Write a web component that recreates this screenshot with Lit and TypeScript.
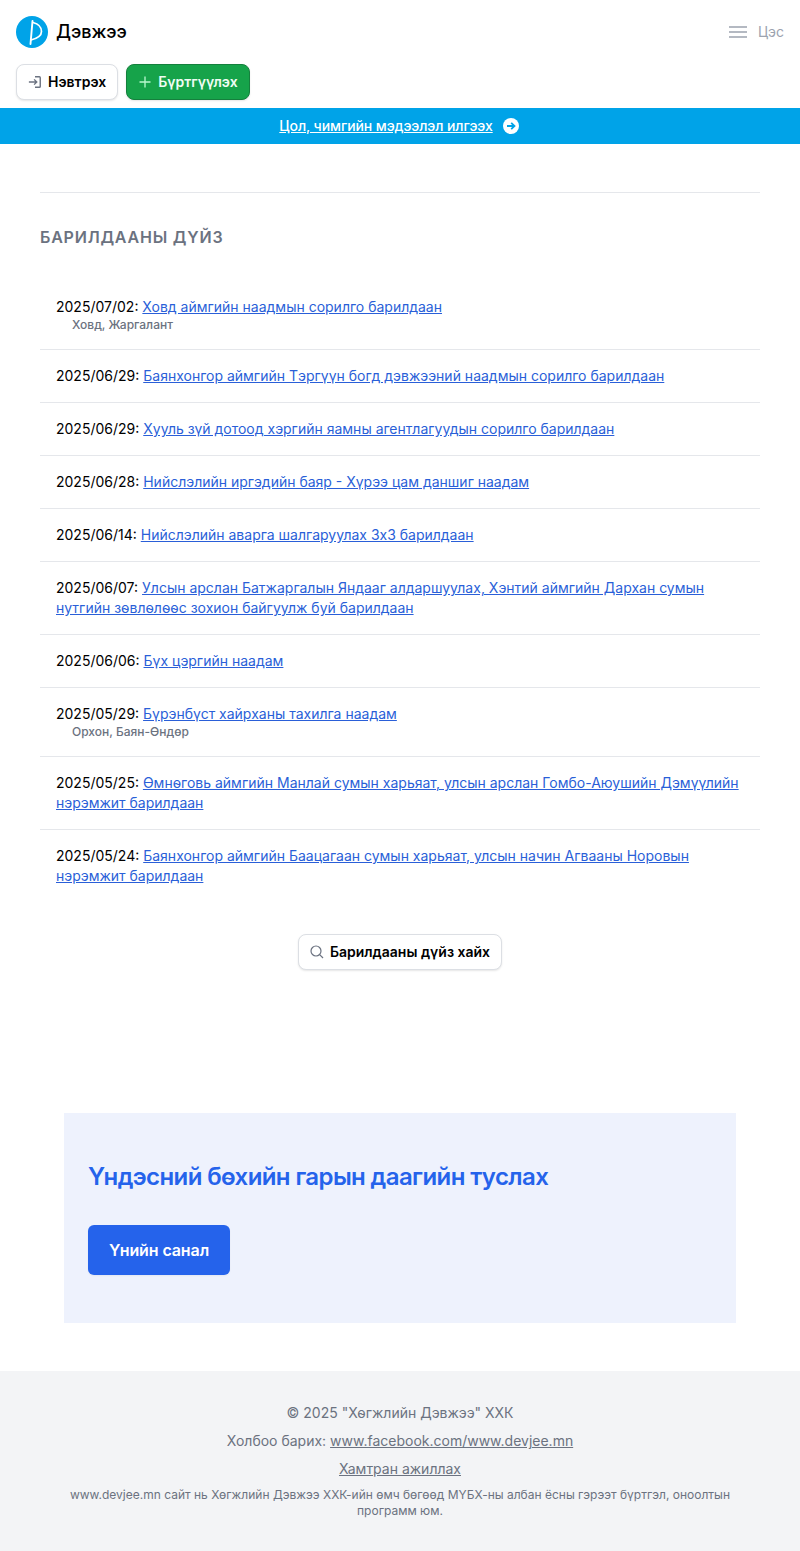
import { LitElement, html, css } from "lit";
import { customElement } from "lit/decorators.js";

const rows = [
  { d: "2025/07/02", t: "Ховд аймгийн наадмын сорилго барилдаан", s: "Ховд, Жаргалант" },
  { d: "2025/06/29", t: "Баянхонгор аймгийн Тэргүүн богд дэвжээний наадмын сорилго барилдаан" },
  { d: "2025/06/29", t: "Хууль зүй дотоод хэргийн яамны агентлагуудын сорилго барилдаан" },
  { d: "2025/06/28", t: "Нийслэлийн иргэдийн баяр - Хүрээ цам даншиг наадам" },
  { d: "2025/06/14", t: "Нийслэлийн аварга шалгаруулах 3х3 барилдаан" },
  { d: "2025/06/07", t: "Улсын арслан Батжаргалын Яндааг алдаршуулах, Хэнтий аймгийн Дархан сумын нутгийн зөвлөлөөс зохион байгуулж буй барилдаан" },
  { d: "2025/06/06", t: "Бүх цэргийн наадам" },
  { d: "2025/05/29", t: "Бүрэнбүст хайрханы тахилга наадам", s: "Орхон, Баян-Өндөр" },
  { d: "2025/05/25", t: "Өмнөговь аймгийн Манлай сумын харьяат, улсын арслан Гомбо-Аюушийн Дэмүүлийн нэрэмжит барилдаан" },
  { d: "2025/05/24", t: "Баянхонгор аймгийн Баацагаан сумын харьяат, улсын начин Агвааны Норовын нэрэмжит барилдаан" },
];

@customElement("app-root")
export class AppRoot extends LitElement {
  static styles = css`
    :host { display: block; font-family: Inter, "Liberation Sans", sans-serif; color: #000; background: #fff; }
    a { color: inherit; }
    .top { display: flex; justify-content: space-between; align-items: center; height: 64px; padding: 0 16px; box-sizing: border-box; }
    .brand { display: flex; align-items: center; gap: 8px; font-size: 18px; font-weight: 500; line-height: 28px; color: #000; letter-spacing: -.05px; }
    .brand svg { display: block; }
    .menu { display: flex; align-items: center; gap: 10px; font-size: 14px; line-height: 20px; color: #9ca3af; }
    .menu svg { display: block; }
    .actions { display: flex; gap: 8px; padding: 0 16px 8px; }
    .btn { display: inline-flex; align-items: center; box-sizing: border-box; height: 36px; border-radius: 8px; font-size: 14px; line-height: 20px; font-weight: 600; border: 1px solid #dcdfe4; background: #fff; color: #000; box-shadow: 0 1px 2px rgba(0,0,0,.1); }
    .login { padding: 0 11px; gap: 6px; }
    .register { padding: 0 11px; gap: 8px; background: #16a34a; border-color: #15803d; color: #f0fdf4; }
    .register svg { margin-left: 1px; margin-right: -1px; }
    .banner { display: flex; align-items: center; justify-content: center; gap: 10px; height: 36px; padding-right: 2px; background: #00a3e8; color: #fff; font-size: 14px; font-weight: 500; line-height: 20px; letter-spacing: -.1px; }
    main { padding: 48px 40px 0; }
    hr { border: 0; border-top: 1px solid #e5e7eb; margin: 0; }
    h2 { margin: 32px 0 0; font-size: 16px; line-height: 24px; font-weight: 600; letter-spacing: .8px; color: #6b7280; }
    ul { list-style: none; margin: 32px 0 0; padding: 0; }
    li { padding: 16px; font-size: 14px; line-height: 20px; border-bottom: 1px solid #e5e7eb; }
    li:last-child { border-bottom: 0; }
    li a { color: #2a5fd8; }
    .sub { padding-left: 16px; font-size: 12px; line-height: 16px; font-weight: 500; color: #6b7280; }
    .search-wrap { display: flex; justify-content: center; margin-top: 32px; }
    .search { padding: 0 11px; gap: 6px; }
    .promo { margin: 143px 64px 0; padding: 48px 24px; height: 210px; box-sizing: border-box; background: #eef2fd; }
    .promo h3 { margin: 0; font-size: 24px; line-height: 32px; font-weight: 600; letter-spacing: -.6px; color: #2563eb; }
    .cta { display: inline-flex; align-items: center; margin-top: 32px; height: 50px; padding: 0 21px; border-radius: 6px; background: #2563eb; color: #fff; font-size: 16px; line-height: 24px; font-weight: 600; letter-spacing: -.1px; box-shadow: 0 1px 2px rgba(0,0,0,.05); }
    footer { margin-top: 48px; height: 180px; padding: 32px 48px 0; box-sizing: border-box; background: #f3f4f6; color: #6b7280; text-align: center; font-size: 14px; line-height: 20px; }
    footer p { margin: 0 0 8px; }
    footer .fine { margin: 0; font-size: 12px; line-height: 16px; }
  `;

  render() {
    return html`
      <header class="top">
        <div class="brand">
          <svg width="32" height="32" viewBox="0 0 32 32">
            <circle cx="16" cy="16" r="16" fill="#00a3e8"/>
            <path d="M17 6.500C22.500 8 25.500 11.500 25.500 15.500C25.500 19.500 21 22.500 15 24" fill="none" stroke="#fff" stroke-width="1.700" stroke-linecap="round"/>
            <path d="M16.500 5L14.500 28" fill="none" stroke="#fff" stroke-width="1.900" stroke-linecap="round"/>
          </svg>
          Дэвжээ
        </div>
        <div class="menu">
          <svg width="20" height="20" viewBox="0 0 20 20" stroke="#9ca3af" stroke-width="1.5" fill="none"><path d="M1 5h18M1 10h18M1 15h18"/></svg>
          Цэс
        </div>
      </header>
      <div class="actions">
        <span class="btn login">
          <svg width="14" height="14" viewBox="0 0 16 16" fill="none" stroke="#6b7280" stroke-width="1.600"><path d="M1 8h9M7 5l3 3-3 3M8 2h5a1 1 0 0 1 1 1v10a1 1 0 0 1-1 1H8"/></svg>
          Нэвтрэх
        </span>
        <span class="btn register">
          <svg width="12" height="12" viewBox="0 0 12 12" fill="none" stroke="#bbf7d0" stroke-width="1.300"><path d="M6 .5v11M.5 6h11"/></svg>
          Бүртгүүлэх
        </span>
      </div>
      <div class="banner">
        <a href="#">Цол, чимгийн мэдээлэл илгээх</a>
        <svg width="16" height="16" viewBox="0 0 16 16"><circle cx="8" cy="8" r="8" fill="#fff"/><path d="M4 8h7.500M8.200 4.800 11.500 8l-3.300 3.200" fill="none" stroke="#00a3e8" stroke-width="1.800"/></svg>
      </div>
      <main>
        <hr />
        <h2>БАРИЛДААНЫ ДҮЙЗ</h2>
        <ul>
          ${rows.map((r) => html`<li>${r.d}: <a href="#">${r.t}</a>${r.s ? html`<div class="sub">${r.s}</div>` : ""}</li>`)}
        </ul>
        <div class="search-wrap">
          <span class="btn search">
            <svg width="14" height="14" viewBox="0 0 14 14" fill="none" stroke="#6b7280" stroke-width="1.200"><circle cx="6" cy="6" r="5"/><path d="M9.700 9.700 13 13"/></svg>
            Барилдааны дүйз хайх
          </span>
        </div>
      </main>
      <section class="promo">
        <h3>Үндэсний бөхийн гарын даагийн туслах</h3>
        <span class="cta">Үнийн санал</span>
      </section>
      <footer>
        <p>© 2025 "Хөгжлийн Дэвжээ" ХХК</p>
        <p>Холбоо барих: <a href="#">www.facebook.com/www.devjee.mn</a></p>
        <p><a href="#">Хамтран ажиллах</a></p>
        <p class="fine">www.devjee.mn сайт нь Хөгжлийн Дэвжээ ХХК-ийн өмч бөгөөд МҮБХ-ны албан ёсны гэрээт бүртгэл, оноолтын программ юм.</p>
      </footer>
    `;
  }
}
